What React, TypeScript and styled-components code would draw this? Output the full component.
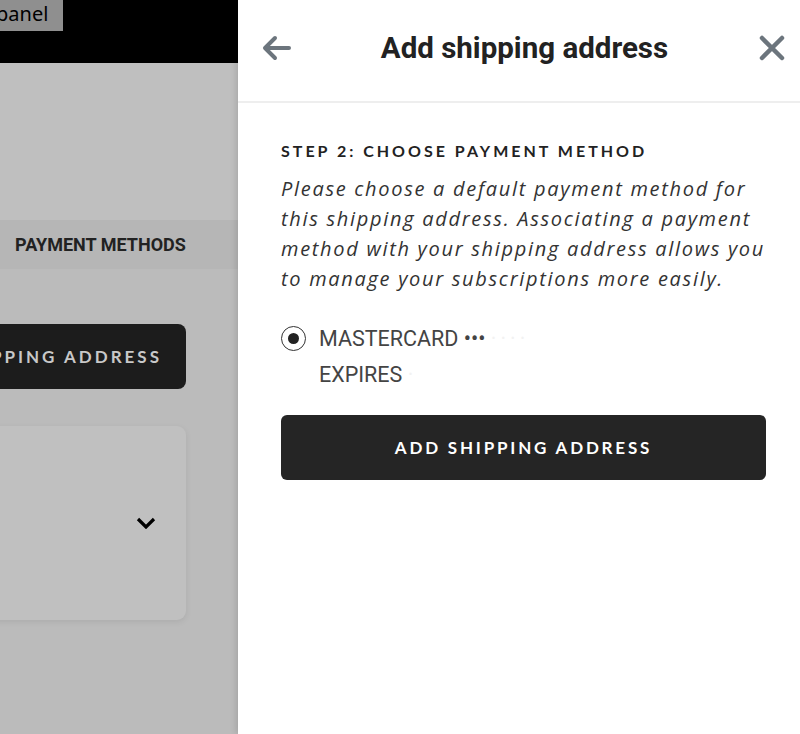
import React from "react";
import styled, { createGlobalStyle } from "styled-components";

const GlobalStyle = createGlobalStyle`
  html, body {
    margin: 0;
    padding: 0;
    height: 100%;
    overflow: hidden;
  }
  #root {
    height: 100%;
  }
`;

const BackIcon = () => (
  <svg width="32" height="32" viewBox="0 0 32 32" fill="none">
    <path
      d="M28 16H5M14 6L4 16l10 10"
      stroke="#6c757d"
      strokeWidth="4"
      strokeLinecap="round"
      strokeLinejoin="round"
    />
  </svg>
);

const CloseIcon = () => (
  <svg width="26" height="26" viewBox="0 0 26 26" fill="none">
    <path
      d="M3 3l20 20M23 3L3 23"
      stroke="#6c757d"
      strokeWidth="4.5"
      strokeLinecap="round"
    />
  </svg>
);

const Chevron = () => (
  <svg width="20" height="12" viewBox="0 0 20 12" fill="none">
    <path d="M2 2l8 8 8-8" stroke="#000" strokeWidth="3.2" />
  </svg>
);

const App = () => {
  return (
    <>
      <GlobalStyle />
      <Screen>
        <Backdrop>
          <TopBar>
            <PanelLabel>panel</PanelLabel>
          </TopBar>
          <Hero />
          <TabBar>
            <Tab>PAYMENT METHODS</Tab>
          </TabBar>
          <Main>
            <GhostButton>ADD SHIPPING ADDRESS</GhostButton>
            <Card>
              <Chevron />
            </Card>
          </Main>
        </Backdrop>
        <Drawer>
          <Header>
            <IconButton>
              <BackIcon />
            </IconButton>
            <Title>Add shipping address</Title>
            <IconButton>
              <CloseIcon />
            </IconButton>
          </Header>
          <Body>
            <StepTitle>STEP 2: CHOOSE PAYMENT METHOD</StepTitle>
            <Intro>
              Please choose a default payment method for this shipping address.
              Associating a payment method with your shipping address allows you
              to manage your subscriptions more easily.
            </Intro>
            <Option>
              <Radio>
                <Dot />
              </Radio>
              <OptionText>
                <Line>
                  MASTERCARD ••• <Hidden>····</Hidden>
                </Line>
                <Line>
                  EXPIRES <Hidden>·</Hidden>
                </Line>
              </OptionText>
            </Option>
            <SubmitButton>ADD SHIPPING ADDRESS</SubmitButton>
          </Body>
        </Drawer>
      </Screen>
    </>
  );
};

export default App;

const Screen = styled.div`
  display: flex;
  width: 100vw;
  height: 100vh;
  overflow: hidden;
`;

const Backdrop = styled.div`
  flex: 1;
  min-width: 0;
  display: flex;
  flex-direction: column;
  background: #bbbbbb;
  overflow: hidden;
`;

const TopBar = styled.div`
  height: 63px;
  flex-shrink: 0;
  background: #000;
`;

const PanelLabel = styled.div`
  display: inline-block;
  height: 31px;
  width: 67px;
  margin-left: -4px;
  box-sizing: border-box;
  background: #8f8f8f;
  color: #000;
  font-family: "Noto Sans", sans-serif;
  font-size: 20px;
  line-height: 27px;
`;

const Hero = styled.div`
  height: 157px;
  background: #bfbfbf;
`;

const TabBar = styled.div`
  height: 49px;
  display: flex;
  align-items: center;
  background: #b6b6b6;
`;

const Tab = styled.div`
  margin-left: 15px;
  font-family: Roboto, sans-serif;
  font-weight: 700;
  font-size: 18px;
  color: #222;
  white-space: nowrap;
`;

const Main = styled.div`
  display: flex;
  flex-direction: column;
  gap: 37px;
  padding-top: 55px;
  margin-left: -127px;
  width: 313px;
`;

const GhostButton = styled.div`
  height: 65px;
  border-radius: 8px;
  background: #1c1c1c;
  color: #c8c8c8;
  font-family: Lato, sans-serif;
  font-weight: 700;
  font-size: 17px;
  letter-spacing: 3px;
  display: flex;
  align-items: center;
  justify-content: flex-end;
  padding-right: 24px;
  white-space: nowrap;
`;

const Card = styled.div`
  height: 194px;
  border-radius: 9px;
  background: #c0c0c0;
  box-shadow: 0 2px 6px rgba(0, 0, 0, 0.08);
  display: flex;
  align-items: center;
  justify-content: flex-end;
  padding-right: 30px;
`;

const Drawer = styled.div`
  width: 562px;
  flex-shrink: 0;
  background: #fff;
  box-shadow: -2px 0 6px rgba(0, 0, 0, 0.12);
  display: flex;
  flex-direction: column;
`;

const Header = styled.div`
  height: 103px;
  box-sizing: border-box;
  border-bottom: 2px solid #eeeeee;
  display: flex;
  align-items: center;
  justify-content: space-between;
  padding: 0 11px 6px 22px;
`;

const IconButton = styled.div`
  display: flex;
  align-items: center;
  justify-content: center;
  width: 34px;
  height: 34px;
`;

const Title = styled.h1`
  margin: 0;
  font-family: Roboto, sans-serif;
  font-weight: 700;
  font-size: 29.5px;
  color: #222;
`;

const Body = styled.div`
  padding: 36px 34px 0 43px;
  display: flex;
  flex-direction: column;
`;

const StepTitle = styled.div`
  font-family: Lato, sans-serif;
  font-weight: 700;
  font-size: 16px;
  letter-spacing: 3px;
  color: #222;
  line-height: 24px;
`;

const Intro = styled.p`
  margin: 11px 0 0;
  font-family: "Open Sans", sans-serif;
  font-style: italic;
  font-size: 20px;
  line-height: 30px;
  letter-spacing: 1.7px;
  color: #333;
`;

const Option = styled.div`
  display: flex;
  align-items: flex-start;
  gap: 13px;
  margin-top: 31px;
`;

const Radio = styled.div`
  width: 25px;
  height: 25px;
  box-sizing: border-box;
  border: 1.5px solid #333;
  border-radius: 50%;
  display: flex;
  align-items: center;
  justify-content: center;
  margin-top: 1px;
`;

const Dot = styled.div`
  width: 11px;
  height: 11px;
  border-radius: 50%;
  background: #222;
`;

const OptionText = styled.div`
  display: flex;
  flex-direction: column;
  gap: 8px;
`;

const Line = styled.div`
  font-family: Roboto, sans-serif;
  font-size: 21.5px;
  line-height: 28px;
  color: #444;
`;

const Hidden = styled.span`
  color: #f2f2f2;
  letter-spacing: 4px;
`;

const SubmitButton = styled.button`
  margin-top: 26px;
  height: 65px;
  border: none;
  border-radius: 6px;
  background: #252525;
  color: #fff;
  font-family: Lato, sans-serif;
  font-weight: 700;
  font-size: 17px;
  letter-spacing: 2.8px;
  cursor: pointer;
`;
